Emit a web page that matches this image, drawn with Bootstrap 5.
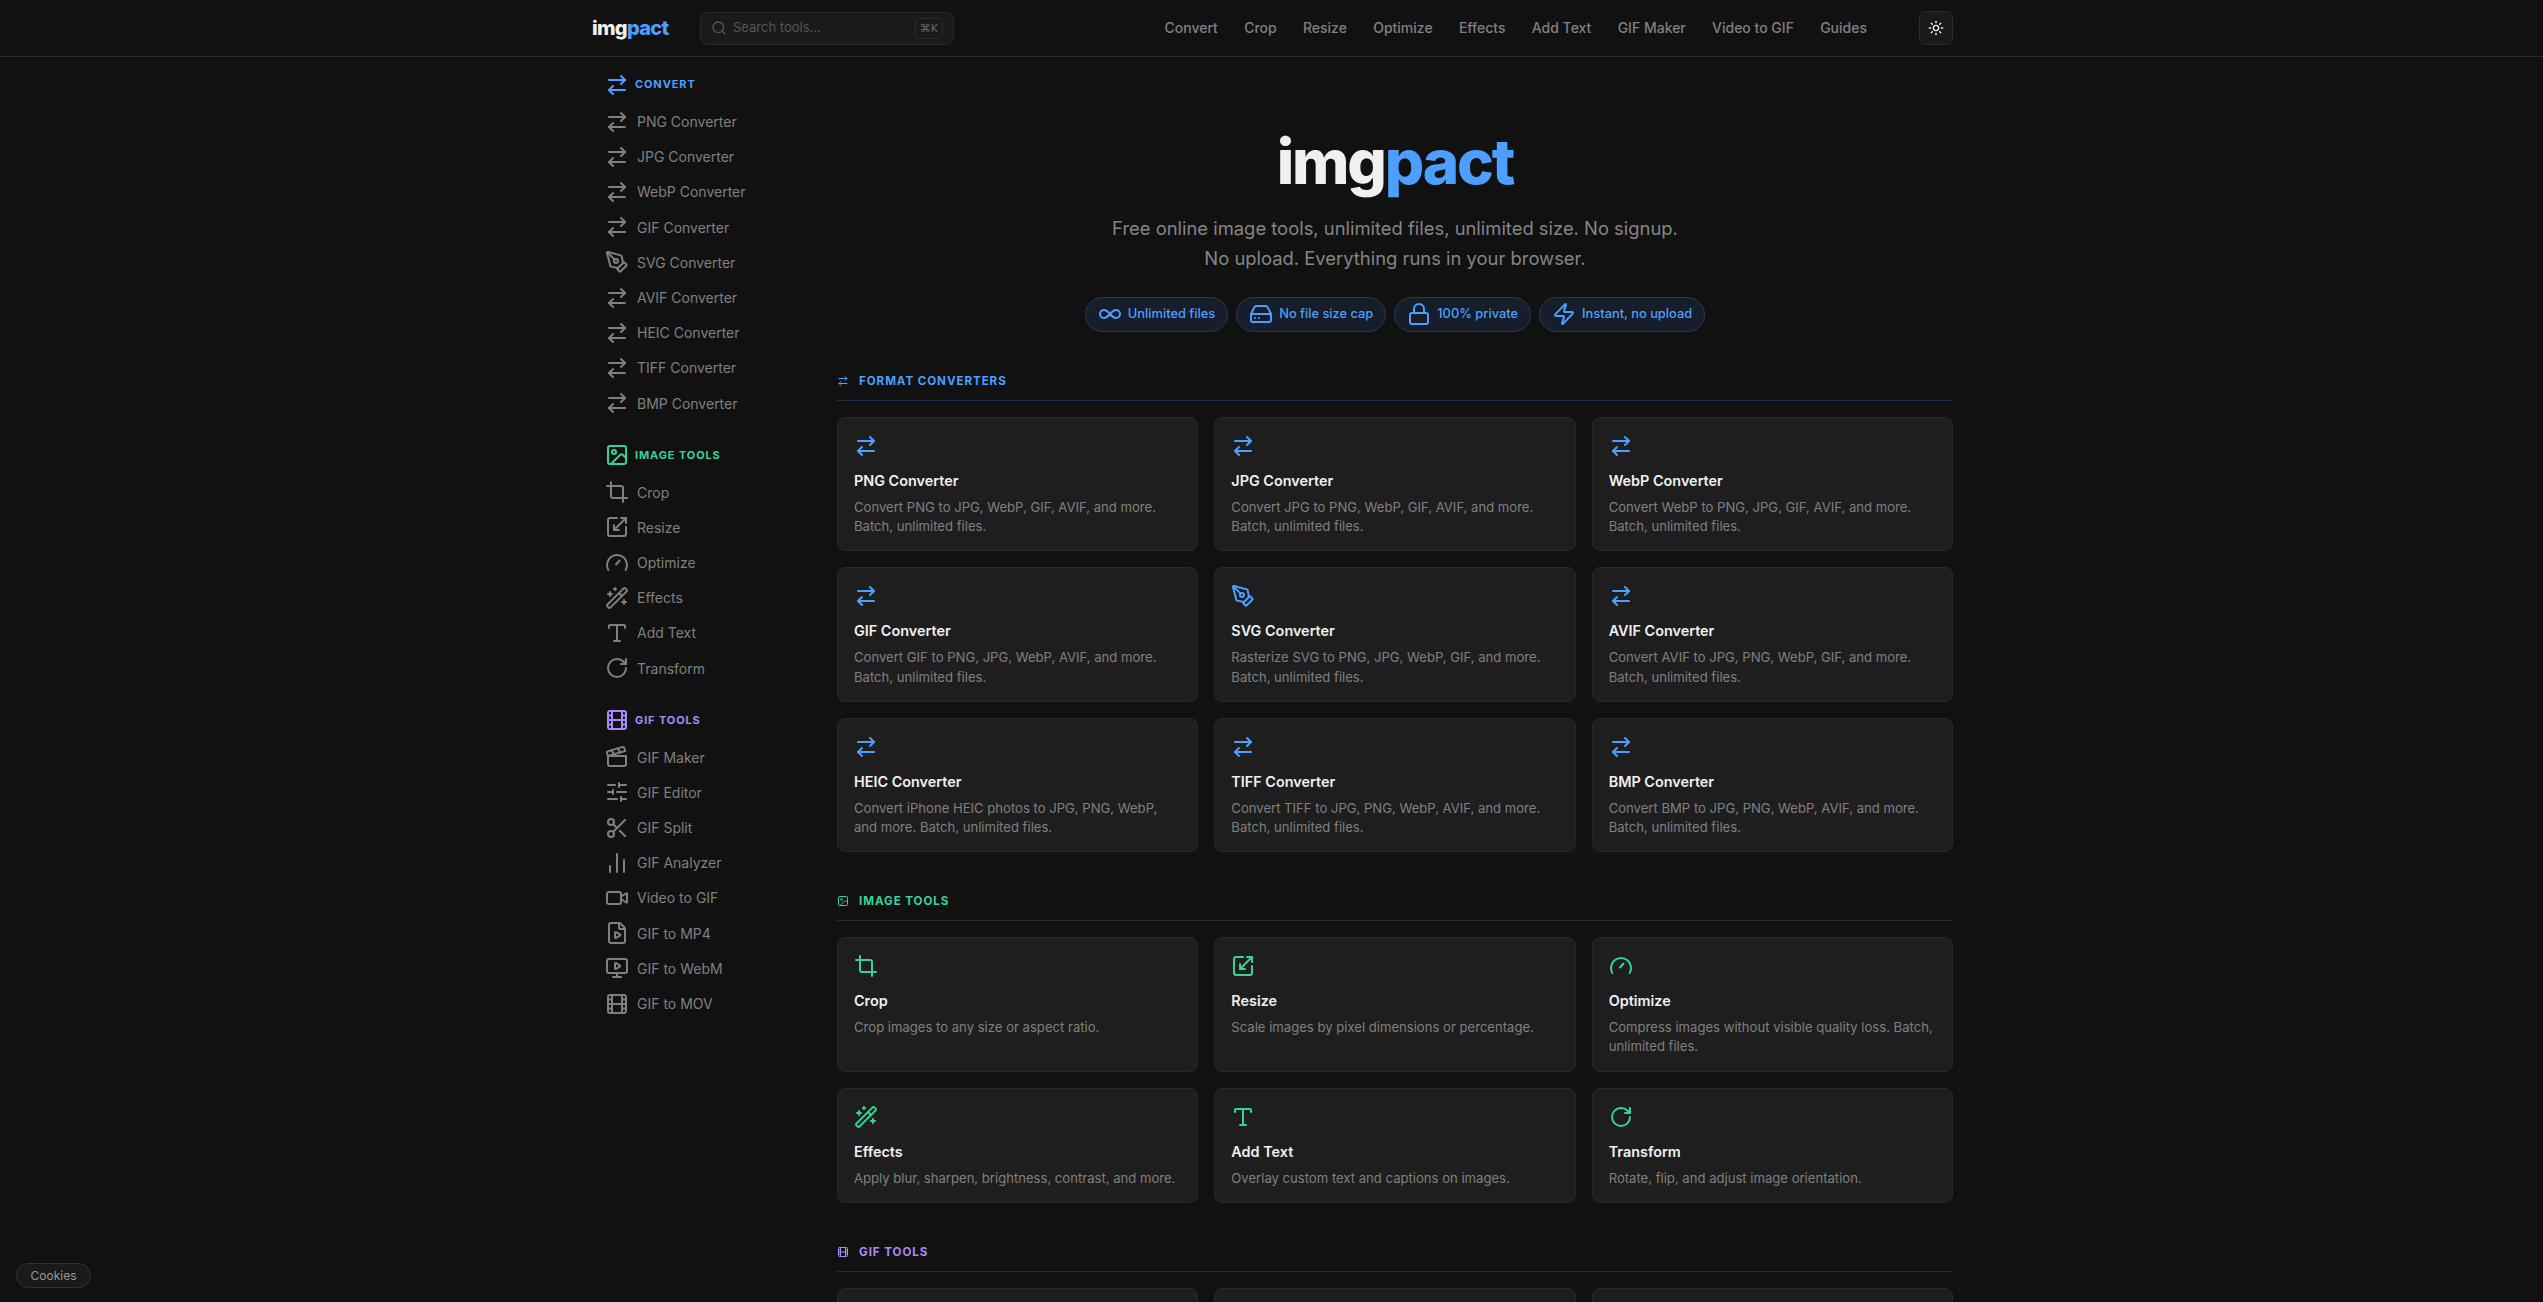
<!DOCTYPE html>
<html lang="en" data-bs-theme="dark">
<head>
    <meta charset="UTF-8">
    <title>imgpact | Free online image tools</title>
    <link href="https://cdn.jsdelivr.net/npm/bootstrap@5.3.0/dist/css/bootstrap.min.css" rel="stylesheet">
    <style>
        html, body { height: 100%; overflow: hidden; }
        body { background: #111; color: #808080; font-family: Inter, "Liberation Sans", sans-serif; font-size: 14px; }
        a { text-decoration: none; color: inherit; }

        .ico { display: block; width: 24px; height: 24px; flex: none; fill: none; stroke: currentColor; stroke-width: 2; stroke-linecap: round; stroke-linejoin: round; }
        .ico-16 { width: 16px; height: 16px; }
        .ico-12 { width: 12px; height: 12px; }

        .top-bar { height: 57px; border-bottom: 1px solid #2a2a2a; padding: 0; }
        .shell { width: 1361px; margin: 0 auto 0 592px; }
        .brand { font-size: 20px; font-weight: 800; letter-spacing: -0.035em; color: #f0f0f0; line-height: 1; padding: 0; margin: 0 31px 0 0; width: 77px; }
        .tone-blue { color: #4d9fff; }
        .tone-green { color: #34d399; }
        .tone-purple { color: #a78bfa; }
        .search-box { width: 254px; height: 33px; background: #1a1a1a; border: 1px solid #2a2a2a; border-radius: 8px; padding: 0 10px; color: #555; font-size: 13px; gap: 6px; }
        .kbd-key { margin-left: auto; border: 1px solid #2a2a2a; border-radius: 4px; padding: 0 4px; height: 21px; line-height: 19px; font-size: 11px; color: #666; font-family: "DejaVu Sans", sans-serif; }
        .top-links { gap: 26.25px; font-size: 14px; font-weight: 500; color: #808080; margin-right: 52px; margin-bottom: 1px; }
        .theme-btn { width: 34px; height: 34px; border: 1px solid #2a2a2a; border-radius: 6px; background: #1a1a1a; color: #f0f0f0; padding: 0; }

        .side-col { width: 245px; flex: none; padding: 15.5px 0 0 13px; }
        .side-group { margin-bottom: 22.4px; }
        .side-head { height: 24px; margin-bottom: 7.5px; gap: 6px; font-size: 11px; font-weight: 700; letter-spacing: .08em; text-transform: uppercase; }
        .side-link { height: 35.2px; gap: 8px; color: #808080; font-size: 14px; }

        .main-col { width: 1116px; flex: none; }
        .hero-block { padding-top: 73.5px; text-align: center; }
        .hero-logo { font-size: 62px; font-weight: 800; letter-spacing: -0.035em; line-height: 1; color: #f0f0f0; margin: 0 0 20px; }
        .hero-sub { font-size: 18.4px; line-height: 30px; color: #858585; margin: 0 0 24px; }
        .perk { height: 35px; border: 1px solid #25395a; background: #161d2b; color: #4d9fff; border-radius: 18px; padding: 0 12px; gap: 6px; font-size: 12.85px; font-weight: 500; }
        .sect-head { gap: 10px; font-size: 11.6px; font-weight: 700; letter-spacing: .08em; text-transform: uppercase; padding-bottom: 10px; margin-bottom: 16px; line-height: 18px; border-bottom: 1px solid; }
        .sect-blue { margin-top: 40.5px; border-color: #1d3048; }
        .sect-green { margin-top: 40px; border-color: #17303a; }
        .sect-purple { margin-top: 40px; border-color: #282a3a; }
        .tool-card { height: 100%; background: #1e1e1e; border: 1px solid #282828; border-radius: 8px; padding: 16px 16px 14px; color: #808080; }
        .tool-name { font-size: 14.4px; font-weight: 600; color: #f0f0f0; line-height: 20px; margin: 13px 0 7px; }
        .tool-desc { font-size: 13.1px; line-height: 19.2px; margin: 0; }

        .cookie-pill { position: fixed; left: 16px; bottom: 14px; height: 25px; width: 75px; background: #1a1a1a; border: 1px solid #333; border-radius: 13px; color: #999; font-size: 12px; padding: 0; }
    </style>
</head>
<body>
    <svg width="0" height="0" class="d-none">
        <symbol id="i-swap" viewBox="0 0 24 24"><path d="m16 3 4 4-4 4"/><path d="M20 7H4"/><path d="m8 21-4-4 4-4"/><path d="M4 17h16"/></symbol>
        <symbol id="i-pen" viewBox="0 0 24 24"><path d="M15.707 21.293a1 1 0 0 1-1.414 0l-1.586-1.586a1 1 0 0 1 0-1.414l5.586-5.586a1 1 0 0 1 1.414 0l1.586 1.586a1 1 0 0 1 0 1.414z"/><path d="m18 13-1.375-6.874a1 1 0 0 0-.746-.776L3.235 2.028a1 1 0 0 0-1.207 1.207L5.35 15.879a1 1 0 0 0 .776.746L13 18"/><path d="m2.3 2.3 7.286 7.286"/><circle cx="11" cy="11" r="2"/></symbol>
        <symbol id="i-image" viewBox="0 0 24 24"><rect x="3" y="3" width="18" height="18" rx="2"/><circle cx="9" cy="9" r="2"/><path d="m21 15-3.086-3.086a2 2 0 0 0-2.828 0L6 21"/></symbol>
        <symbol id="i-crop" viewBox="0 0 24 24"><path d="M6 2v14a2 2 0 0 0 2 2h14"/><path d="M18 22V8a2 2 0 0 0-2-2H2"/></symbol>
        <symbol id="i-scale" viewBox="0 0 24 24"><path d="M12 3H5a2 2 0 0 0-2 2v14a2 2 0 0 0 2 2h14a2 2 0 0 0 2-2v-7"/><path d="M14 15H9v-5"/><path d="M16 3h5v5"/><path d="M21 3 9 15"/></symbol>
        <symbol id="i-gauge" viewBox="0 0 24 24"><path d="m11 13.5 3.5-4"/><path d="M3.34 19a10 10 0 1 1 17.32 0"/></symbol>
        <symbol id="i-wand" viewBox="0 0 24 24"><path d="m21.64 3.64-1.28-1.28a1.21 1.21 0 0 0-1.72 0L2.36 18.64a1.21 1.21 0 0 0 0 1.72l1.28 1.28a1.2 1.2 0 0 0 1.72 0L21.64 5.36a1.2 1.2 0 0 0 0-1.72"/><path d="m14 7 3 3"/><path d="M5 6v4"/><path d="M19 14v4"/><path d="M10 2v2"/><path d="M7 8H3"/><path d="M21 16h-4"/><path d="M11 3H9"/></symbol>
        <symbol id="i-type" viewBox="0 0 24 24"><path d="M12 4v16"/><path d="M4 7V5a1 1 0 0 1 1-1h14a1 1 0 0 1 1 1v2"/><path d="M9 20h6"/></symbol>
        <symbol id="i-rotate" viewBox="0 0 24 24"><path d="M21 12a9 9 0 1 1-9-9c2.52 0 4.93 1 6.74 2.74L21 8"/><path d="M21 3v5h-5"/></symbol>
        <symbol id="i-film" viewBox="0 0 24 24"><rect x="3" y="3" width="18" height="18" rx="2"/><path d="M7 3v18"/><path d="M3 7.5h4"/><path d="M3 12h18"/><path d="M3 16.5h4"/><path d="M17 3v18"/><path d="M17 7.5h4"/><path d="M17 16.5h4"/></symbol>
        <symbol id="i-clapper" viewBox="0 0 24 24"><path d="M20.2 6 3 11l-.9-2.4c-.3-1.1.3-2.2 1.3-2.5l13.5-4c1.1-.3 2.2.3 2.5 1.3Z"/><path d="m6.2 5.3 3.1 3.9"/><path d="m12.4 3.4 3.1 4"/><path d="M3 11h18v8a2 2 0 0 1-2 2H5a2 2 0 0 1-2-2Z"/></symbol>
        <symbol id="i-sliders" viewBox="0 0 24 24"><path d="M10 5H3"/><path d="M12 19H3"/><path d="M14 3v4"/><path d="M16 17v4"/><path d="M21 12h-9"/><path d="M21 19h-5"/><path d="M21 5h-7"/><path d="M8 10v4"/><path d="M8 12H3"/></symbol>
        <symbol id="i-scissors" viewBox="0 0 24 24"><circle cx="6" cy="6" r="3"/><path d="M8.12 8.12 12 12"/><path d="M20 4 8.12 15.88"/><circle cx="6" cy="18" r="3"/><path d="M14.8 14.8 20 20"/></symbol>
        <symbol id="i-bars" viewBox="0 0 24 24"><path d="M5 21v-6"/><path d="M12 21V3"/><path d="M19 21V9"/></symbol>
        <symbol id="i-video" viewBox="0 0 24 24"><path d="m16 13 5.223 3.482a.5.5 0 0 0 .777-.416V7.87a.5.5 0 0 0-.752-.432L16 10.5"/><rect x="2" y="6" width="14" height="12" rx="2"/></symbol>
        <symbol id="i-file" viewBox="0 0 24 24"><path d="M6 22a2 2 0 0 1-2-2V4a2 2 0 0 1 2-2h8a2.4 2.4 0 0 1 1.704.706l3.588 3.588A2.4 2.4 0 0 1 20 8v12a2 2 0 0 1-2 2z"/><path d="M14 2v5a1 1 0 0 0 1 1h5"/><path d="M15.033 13.44a.647.647 0 0 1 0 1.12l-4.065 2.352a.645.645 0 0 1-.968-.56v-4.704a.645.645 0 0 1 .967-.56z"/></symbol>
        <symbol id="i-monitor" viewBox="0 0 24 24"><path d="M10 7.75a.75.75 0 0 1 1.142-.638l3.664 2.249a.75.75 0 0 1 0 1.278l-3.664 2.25a.75.75 0 0 1-1.142-.64z"/><path d="M12 17v4"/><path d="M8 21h8"/><rect x="2" y="3" width="20" height="14" rx="2"/></symbol>
        <symbol id="i-search" viewBox="0 0 24 24"><circle cx="11" cy="11" r="8"/><path d="m21 21-4.3-4.3"/></symbol>
        <symbol id="i-sun" viewBox="0 0 24 24"><circle cx="12" cy="12" r="4"/><path d="M12 2v2"/><path d="M12 20v2"/><path d="m4.93 4.93 1.41 1.41"/><path d="m17.66 17.66 1.41 1.41"/><path d="M2 12h2"/><path d="M20 12h2"/><path d="m6.34 17.66-1.41 1.41"/><path d="m19.07 4.93-1.41 1.41"/></symbol>
        <symbol id="i-infinity" viewBox="0 0 24 24"><path d="M6 16c5 0 7-8 12-8a4 4 0 0 1 0 8c-5 0-7-8-12-8a4 4 0 1 0 0 8"/></symbol>
        <symbol id="i-drive" viewBox="0 0 24 24"><path d="M22 12H2"/><path d="M5.45 5.11 2 12v6a2 2 0 0 0 2 2h16a2 2 0 0 0 2-2v-6l-3.45-6.89A2 2 0 0 0 16.76 4H7.24a2 2 0 0 0-1.79 1.11z"/><path d="M6 16h.01"/><path d="M10 16h.01"/></symbol>
        <symbol id="i-lock" viewBox="0 0 24 24"><rect x="3" y="11" width="18" height="11" rx="2"/><path d="M7 11V7a5 5 0 0 1 10 0v4"/></symbol>
        <symbol id="i-zap" viewBox="0 0 24 24"><path d="M4 14a1 1 0 0 1-.78-1.63l9.9-10.2a.5.5 0 0 1 .86.46l-1.92 6.02A1 1 0 0 0 13 10h7a1 1 0 0 1 .78 1.63l-9.9 10.2a.5.5 0 0 1-.86-.46l1.92-6.02A1 1 0 0 0 11 14z"/></symbol>
    </svg>

    <nav class="navbar top-bar">
        <div class="shell d-flex align-items-center">
            <a class="brand" href="#">img<span class="tone-blue">pact</span></a>
            <div class="search-box d-flex align-items-center">
                <svg class="ico ico-16"><use href="#i-search"/></svg>
                <span>Search tools...</span>
                <span class="kbd-key">⌘K</span>
            </div>
            <div class="top-links d-flex ms-auto">
                <a href="#">Convert</a>
                <a href="#">Crop</a>
                <a href="#">Resize</a>
                <a href="#">Optimize</a>
                <a href="#">Effects</a>
                <a href="#">Add Text</a>
                <a href="#">GIF Maker</a>
                <a href="#">Video to GIF</a>
                <a href="#">Guides</a>
            </div>
            <button class="theme-btn btn d-flex align-items-center justify-content-center" type="button" aria-label="Theme">
                <svg class="ico ico-16"><use href="#i-sun"/></svg>
            </button>
        </div>
    </nav>

    <div class="shell d-flex">
        <aside class="side-col">
            <div class="side-group">
                <div class="side-head tone-blue d-flex align-items-center"><svg class="ico"><use href="#i-swap"/></svg>Convert</div>
                <a class="side-link d-flex align-items-center" href="#"><svg class="ico"><use href="#i-swap"/></svg>PNG Converter</a>
                <a class="side-link d-flex align-items-center" href="#"><svg class="ico"><use href="#i-swap"/></svg>JPG Converter</a>
                <a class="side-link d-flex align-items-center" href="#"><svg class="ico"><use href="#i-swap"/></svg>WebP Converter</a>
                <a class="side-link d-flex align-items-center" href="#"><svg class="ico"><use href="#i-swap"/></svg>GIF Converter</a>
                <a class="side-link d-flex align-items-center" href="#"><svg class="ico"><use href="#i-pen"/></svg>SVG Converter</a>
                <a class="side-link d-flex align-items-center" href="#"><svg class="ico"><use href="#i-swap"/></svg>AVIF Converter</a>
                <a class="side-link d-flex align-items-center" href="#"><svg class="ico"><use href="#i-swap"/></svg>HEIC Converter</a>
                <a class="side-link d-flex align-items-center" href="#"><svg class="ico"><use href="#i-swap"/></svg>TIFF Converter</a>
                <a class="side-link d-flex align-items-center" href="#"><svg class="ico"><use href="#i-swap"/></svg>BMP Converter</a>
            </div>
            <div class="side-group">
                <div class="side-head tone-green d-flex align-items-center"><svg class="ico"><use href="#i-image"/></svg>Image Tools</div>
                <a class="side-link d-flex align-items-center" href="#"><svg class="ico"><use href="#i-crop"/></svg>Crop</a>
                <a class="side-link d-flex align-items-center" href="#"><svg class="ico"><use href="#i-scale"/></svg>Resize</a>
                <a class="side-link d-flex align-items-center" href="#"><svg class="ico"><use href="#i-gauge"/></svg>Optimize</a>
                <a class="side-link d-flex align-items-center" href="#"><svg class="ico"><use href="#i-wand"/></svg>Effects</a>
                <a class="side-link d-flex align-items-center" href="#"><svg class="ico"><use href="#i-type"/></svg>Add Text</a>
                <a class="side-link d-flex align-items-center" href="#"><svg class="ico"><use href="#i-rotate"/></svg>Transform</a>
            </div>
            <div class="side-group">
                <div class="side-head tone-purple d-flex align-items-center"><svg class="ico"><use href="#i-film"/></svg>GIF Tools</div>
                <a class="side-link d-flex align-items-center" href="#"><svg class="ico"><use href="#i-clapper"/></svg>GIF Maker</a>
                <a class="side-link d-flex align-items-center" href="#"><svg class="ico"><use href="#i-sliders"/></svg>GIF Editor</a>
                <a class="side-link d-flex align-items-center" href="#"><svg class="ico"><use href="#i-scissors"/></svg>GIF Split</a>
                <a class="side-link d-flex align-items-center" href="#"><svg class="ico"><use href="#i-bars"/></svg>GIF Analyzer</a>
                <a class="side-link d-flex align-items-center" href="#"><svg class="ico"><use href="#i-video"/></svg>Video to GIF</a>
                <a class="side-link d-flex align-items-center" href="#"><svg class="ico"><use href="#i-file"/></svg>GIF to MP4</a>
                <a class="side-link d-flex align-items-center" href="#"><svg class="ico"><use href="#i-monitor"/></svg>GIF to WebM</a>
                <a class="side-link d-flex align-items-center" href="#"><svg class="ico"><use href="#i-film"/></svg>GIF to MOV</a>
            </div>
        </aside>

        <main class="main-col">
            <div class="hero-block">
                <h1 class="hero-logo">img<span class="tone-blue">pact</span></h1>
                <p class="hero-sub">Free online image tools, unlimited files, unlimited size. No signup.<br>No upload. Everything runs in your browser.</p>
                <div class="d-flex justify-content-center gap-2">
                    <span class="perk d-flex align-items-center"><svg class="ico"><use href="#i-infinity"/></svg>Unlimited files</span>
                    <span class="perk d-flex align-items-center"><svg class="ico"><use href="#i-drive"/></svg>No file size cap</span>
                    <span class="perk d-flex align-items-center"><svg class="ico"><use href="#i-lock"/></svg>100% private</span>
                    <span class="perk d-flex align-items-center"><svg class="ico"><use href="#i-zap"/></svg>Instant, no upload</span>
                </div>
            </div>

            <div class="sect-head sect-blue tone-blue d-flex align-items-center"><svg class="ico ico-12"><use href="#i-swap"/></svg>Format Converters</div>
            <div class="row g-3">
                <div class="col-4"><a class="tool-card d-block" href="#"><svg class="ico tone-blue"><use href="#i-swap"/></svg><div class="tool-name">PNG Converter</div><p class="tool-desc">Convert PNG to JPG, WebP, GIF, AVIF, and more. Batch, unlimited files.</p></a></div>
                <div class="col-4"><a class="tool-card d-block" href="#"><svg class="ico tone-blue"><use href="#i-swap"/></svg><div class="tool-name">JPG Converter</div><p class="tool-desc">Convert JPG to PNG, WebP, GIF, AVIF, and more. Batch, unlimited files.</p></a></div>
                <div class="col-4"><a class="tool-card d-block" href="#"><svg class="ico tone-blue"><use href="#i-swap"/></svg><div class="tool-name">WebP Converter</div><p class="tool-desc">Convert WebP to PNG, JPG, GIF, AVIF, and more. Batch, unlimited files.</p></a></div>
                <div class="col-4"><a class="tool-card d-block" href="#"><svg class="ico tone-blue"><use href="#i-swap"/></svg><div class="tool-name">GIF Converter</div><p class="tool-desc">Convert GIF to PNG, JPG, WebP, AVIF, and more. Batch, unlimited files.</p></a></div>
                <div class="col-4"><a class="tool-card d-block" href="#"><svg class="ico tone-blue"><use href="#i-pen"/></svg><div class="tool-name">SVG Converter</div><p class="tool-desc">Rasterize SVG to PNG, JPG, WebP, GIF, and more. Batch, unlimited files.</p></a></div>
                <div class="col-4"><a class="tool-card d-block" href="#"><svg class="ico tone-blue"><use href="#i-swap"/></svg><div class="tool-name">AVIF Converter</div><p class="tool-desc">Convert AVIF to JPG, PNG, WebP, GIF, and more. Batch, unlimited files.</p></a></div>
                <div class="col-4"><a class="tool-card d-block" href="#"><svg class="ico tone-blue"><use href="#i-swap"/></svg><div class="tool-name">HEIC Converter</div><p class="tool-desc">Convert iPhone HEIC photos to JPG, PNG, WebP, and more. Batch, unlimited files.</p></a></div>
                <div class="col-4"><a class="tool-card d-block" href="#"><svg class="ico tone-blue"><use href="#i-swap"/></svg><div class="tool-name">TIFF Converter</div><p class="tool-desc">Convert TIFF to JPG, PNG, WebP, AVIF, and more. Batch, unlimited files.</p></a></div>
                <div class="col-4"><a class="tool-card d-block" href="#"><svg class="ico tone-blue"><use href="#i-swap"/></svg><div class="tool-name">BMP Converter</div><p class="tool-desc">Convert BMP to JPG, PNG, WebP, AVIF, and more. Batch, unlimited files.</p></a></div>
            </div>

            <div class="sect-head sect-green tone-green d-flex align-items-center"><svg class="ico ico-12"><use href="#i-image"/></svg>Image Tools</div>
            <div class="row g-3">
                <div class="col-4"><a class="tool-card d-block" href="#"><svg class="ico tone-green"><use href="#i-crop"/></svg><div class="tool-name">Crop</div><p class="tool-desc">Crop images to any size or aspect ratio.</p></a></div>
                <div class="col-4"><a class="tool-card d-block" href="#"><svg class="ico tone-green"><use href="#i-scale"/></svg><div class="tool-name">Resize</div><p class="tool-desc">Scale images by pixel dimensions or percentage.</p></a></div>
                <div class="col-4"><a class="tool-card d-block" href="#"><svg class="ico tone-green"><use href="#i-gauge"/></svg><div class="tool-name">Optimize</div><p class="tool-desc">Compress images without visible quality loss. Batch, unlimited files.</p></a></div>
                <div class="col-4"><a class="tool-card d-block" href="#"><svg class="ico tone-green"><use href="#i-wand"/></svg><div class="tool-name">Effects</div><p class="tool-desc">Apply blur, sharpen, brightness, contrast, and more.</p></a></div>
                <div class="col-4"><a class="tool-card d-block" href="#"><svg class="ico tone-green"><use href="#i-type"/></svg><div class="tool-name">Add Text</div><p class="tool-desc">Overlay custom text and captions on images.</p></a></div>
                <div class="col-4"><a class="tool-card d-block" href="#"><svg class="ico tone-green"><use href="#i-rotate"/></svg><div class="tool-name">Transform</div><p class="tool-desc">Rotate, flip, and adjust image orientation.</p></a></div>
            </div>

            <div class="sect-head sect-purple tone-purple d-flex align-items-center"><svg class="ico ico-12"><use href="#i-film"/></svg>GIF Tools</div>
            <div class="row g-3">
                <div class="col-4"><a class="tool-card d-block" href="#"><svg class="ico tone-purple"><use href="#i-clapper"/></svg><div class="tool-name">GIF Maker</div><p class="tool-desc">Create animated GIFs from images.</p></a></div>
                <div class="col-4"><a class="tool-card d-block" href="#"><svg class="ico tone-purple"><use href="#i-sliders"/></svg><div class="tool-name">GIF Editor</div><p class="tool-desc">Edit frames, timing, and loops.</p></a></div>
                <div class="col-4"><a class="tool-card d-block" href="#"><svg class="ico tone-purple"><use href="#i-scissors"/></svg><div class="tool-name">GIF Split</div><p class="tool-desc">Split a GIF into individual frames.</p></a></div>
            </div>
        </main>
    </div>

    <button class="cookie-pill" type="button">Cookies</button>
</body>
</html>
